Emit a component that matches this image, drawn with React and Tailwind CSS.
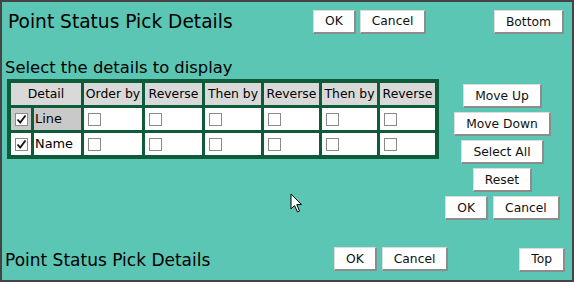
import React from 'react';

const font = { fontFamily: '"DejaVu Sans", Verdana, sans-serif' };

// 3D style white button
const Btn = ({ children, className = '' }) => (
    <button
        className={`h-[24px] px-[11px] bg-white text-[#111] text-[12.3px] leading-none border-t border-l border-[#dcdcdc] border-r-2 border-b-2 border-r-[#8c8c8c] border-b-[#8c8c8c] ${className}`}
    >
        {children}
    </button>
);

const Box = ({ checked }) => (
    <span className="inline-flex w-[13px] h-[13px] border border-[#8a8a8a] bg-white items-center justify-center">
        {checked && (
            <svg width="11" height="11" viewBox="0 0 11 11">
                <path d="M1.5 5.5 L4.2 8.6 L9.5 1.5" fill="none" stroke="#111" strokeWidth="1.8" />
            </svg>
        )}
    </span>
);

const cols = ['Order by', 'Reverse', 'Then by', 'Reverse', 'Then by', 'Reverse'];
const colW = ['w-[58px]', 'w-[57px]', 'w-[56px]', 'w-[55px]', 'w-[55px]', 'w-[55px]'];

const rows = [
    { name: 'Line', shaded: true },
    { name: 'Name', shaded: false },
];

export default function App() {
    return (
        <div style={font} className="relative w-[574px] h-[282px] bg-[#5bc6b4] border-2 border-[#444] text-black overflow-hidden">
            {/* top bar */}
            <div className="flex items-center h-[36px] pt-[3px]">
                <div className="w-[311px] pl-[6px] text-[18.6px] leading-none pt-[2px]">Point Status Pick Details</div>
                <div className="flex gap-[4px]">
                    <Btn>OK</Btn>
                    <Btn>Cancel</Btn>
                </div>
                <div className="ml-auto mr-[8px]">
                    <Btn>Bottom</Btn>
                </div>
            </div>

            <div className="mt-[22px] pl-[3px] text-[16.4px] leading-none">Select the details to display</div>

            <div className="flex mt-[3px]">
                {/* table */}
                <div className="ml-[5px]">
                    <table className="table-fixed bg-[#0e5b3a] border-separate border-spacing-[3px] p-px text-[12.4px] leading-none">
                        <colgroup>
                            <col className="w-[20px]" />
                            <col className="w-[47px]" />
                            {colW.map((w, i) => <col key={i} className={w} />)}
                        </colgroup>
                        <thead>
                            <tr className="h-[22px]">
                                <th colSpan={2} className="bg-[#d9d9d9] font-normal text-center">Detail</th>
                                {cols.map((c, i) => (
                                    <th key={i} className="bg-[#d9d9d9] font-normal text-center whitespace-nowrap">
                                        {c}
                                    </th>
                                ))}
                            </tr>
                        </thead>
                        <tbody>
                            {rows.map((r) => (
                                <tr key={r.name} className="h-[22px]">
                                    <td className={r.shaded ? 'bg-[#c9c9c9]' : 'bg-white'}>
                                        <div className="flex justify-center pt-px"><Box checked /></div>
                                    </td>
                                    <td className={`pl-px text-[12.9px] ${r.shaded ? 'bg-[#c9c9c9]' : 'bg-white'}`}>{r.name}</td>
                                    {cols.map((c, i) => (
                                        <td key={i} className="bg-white pl-[4px]">
                                            <div className="flex pt-px"><Box /></div>
                                        </td>
                                    ))}
                                </tr>
                            ))}
                        </tbody>
                    </table>
                </div>

                {/* side buttons */}
                <div className="flex flex-col items-center gap-[4px] ml-[7px] w-[113px] pt-[5px]">
                    <Btn>Move Up</Btn>
                    <Btn>Move Down</Btn>
                    <Btn>Select All</Btn>
                    <Btn>Reset</Btn>
                    <div className="flex gap-[5px]">
                        <Btn>OK</Btn>
                        <Btn>Cancel</Btn>
                    </div>
                </div>
            </div>

            {/* bottom bar */}
            <div className="flex items-center mt-[26px]">
                <div className="w-[332px] pl-[3px] text-[17px] leading-none pt-[2px]">Point Status Pick Details</div>
                <div className="flex gap-[5px]">
                    <Btn>OK</Btn>
                    <Btn>Cancel</Btn>
                </div>
                <div className="ml-auto mr-[7px]">
                    <Btn>Top</Btn>
                </div>
            </div>

            {/* mouse pointer overlay */}
            <svg className="absolute left-[288px] top-[191px]" width="14" height="22" viewBox="0 0 14 22">
                <path d="M1 1 L1 16 L4.5 12.5 L7.5 19 L9.5 18 L6.8 11.6 L11.5 11.6 Z" fill="#fff" stroke="#000" strokeWidth="1" strokeLinejoin="round" />
            </svg>
        </div>
    );
}
